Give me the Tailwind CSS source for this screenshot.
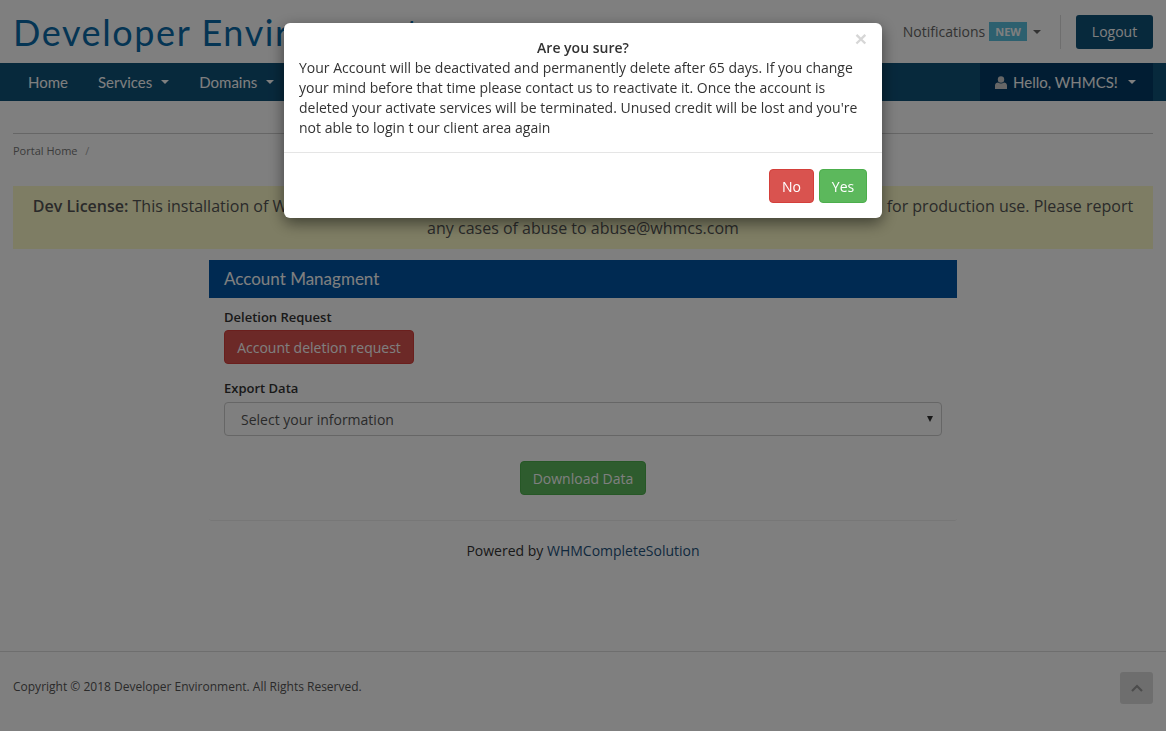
<!DOCTYPE html>
<html lang="en">
<head>
    <meta charset="UTF-8">
    <meta name="viewport" content="width=device-width, initial-scale=1.0">
    <title>Account Managment</title>
    <script src="https://cdn.jsdelivr.net/npm/@tailwindcss/browser@4"></script>
</head>
<body class="bg-white text-[#333] font-['Open_Sans',sans-serif] text-[14px] h-[731px] overflow-hidden">
    <!-- Header -->
    <header class="h-[63px] px-[13px] flex items-center justify-between">
        <a class="font-['Lato',sans-serif] text-[36px] leading-[56px] text-[#0a6aa8] tracking-[1.6px]">Developer Environment</a>
        <div class="flex items-center h-[34px] text-[#666]">
            <span class="mr-[22px]">English</span>
            <span>Notifications</span>
            <span class="ml-[4px] bg-[#5bc0de] text-white text-[11px] font-bold px-[6px] h-[19px] leading-[19px]">NEW</span>
            <span class="ml-[6px] border-x-[4px] border-x-transparent border-t-[4px] border-t-[#666]"></span>
            <span class="ml-[19px] w-px h-[34px] bg-[#ddd]"></span>
            <button class="ml-[15px] h-[34px] w-[77px] bg-[#0f5279] text-white rounded-[3px]">Logout</button>
        </div>
    </header>

    <!-- Nav -->
    <nav class="h-[38px] bg-[#0f5279] pl-[13px] pr-[13px] flex justify-between font-['Lato',sans-serif] text-[15px] text-white">
        <div class="flex">
            <a class="px-[15px] leading-[38px]">Home</a>
            <a class="px-[15px] leading-[38px] flex items-center">Services<span class="ml-[9px] border-x-[4px] border-x-transparent border-t-[4px] border-t-white"></span></a>
            <a class="px-[15px] leading-[38px] flex items-center">Domains<span class="ml-[9px] border-x-[4px] border-x-transparent border-t-[4px] border-t-white"></span></a>
        </div>
        <a class="w-[173px] pl-[15px] bg-[#033b66] flex items-center">
            <svg class="w-[12px] h-[13px] mr-[6px]" viewBox="0 0 12 13" fill="#ccc"><circle cx="6" cy="3.5" r="3.2"/><path d="M0 13V9.5C0 7.5 1.5 6.5 3 6.5c1 .8 2 1.1 3 1.1s2-.3 3-1.1c1.500 0 3 1 3 3V13z"/></svg>
            Hello, WHMCS!<span class="ml-[10px] border-x-[4px] border-x-transparent border-t-[4px] border-t-white"></span>
        </a>
    </nav>

    <main class="px-[13px]">
        <!-- Breadcrumb -->
        <div class="mt-[32px] border-t border-[#ccc] pt-[9px] h-[53px] text-[11px] leading-[15px] text-[#777]">
            Portal Home <span class="ml-[5px] text-[#aaa]">/</span>
        </div>

        <!-- Dev licence alert -->
        <div class="h-[63px] bg-[#fcfbc8] px-[15px] pt-[9px] text-center text-[16px] leading-[22px] text-[#555]">
            <strong class="font-semibold">Dev License:</strong> This installation of WHMCS is running under a Development License and is not authorized to be used for production use. Please report any cases of abuse to abuse@whmcs.com
        </div>

        <!-- Panel -->
        <section class="w-[748px] mx-auto mt-[11px] h-[261px] border-b border-[#eee] rounded-[3px]">
            <h3 class="h-[38px] px-[15px] bg-[#0055a5] text-white font-['Lato',sans-serif] text-[17px] leading-[38px]">Account Managment</h3>
            <div class="px-[15px] pt-[10px]">
                <label class="block font-semibold text-[13px] leading-[18px] text-[#333]">Deletion Request</label>
                <button class="mt-[4px] block h-[34px] w-[190px] bg-[#d9534f] border border-[#d43f3a] text-white rounded-[4px]">Account deletion request</button>
                <label class="mt-[15px] block font-semibold text-[13px] leading-[18px] text-[#333]">Export Data</label>
                <div class="mt-[5px] h-[34px] border border-[#ccc] rounded-[4px] pl-[16px] pr-[8px] flex items-center justify-between text-[#555]">
                    <span>Select your information</span>
                    <span class="border-x-[3.5px] border-x-transparent border-t-[6px] border-t-[#333]"></span>
                </div>
                <div class="mt-[25px] flex justify-center">
                    <button class="h-[34px] w-[126px] bg-[#5cb85c] border border-[#4cae4c] text-white rounded-[4px]">Download Data</button>
                </div>
            </div>
        </section>
        <p class="mt-[20px] text-center leading-[20px]">Powered by <a class="text-[#23527c]">WHMCompleteSolution</a></p>
    </main>

    <!-- Footer -->
    <footer class="mt-[90px] border-t border-[#ddd] px-[13px] pt-[20px] flex justify-between">
        <p class="mt-[6px] text-[12px] leading-[18px] text-[#555]">Copyright © 2018 Developer Environment. All Rights Reserved.</p>
        <a class="w-[33px] h-[32px] rounded-[3px] bg-[#ddd] flex items-center justify-center">
            <svg class="w-[12px] h-[8px]" viewBox="0 0 12 8" fill="none" stroke="#999" stroke-width="2.200"><path d="M1 7l5-5 5 5"/></svg>
        </a>
    </footer>

    <!-- Confirm modal -->
    <div class="fixed inset-0 bg-black/50 flex justify-center items-start pt-[23px]">
        <div class="relative w-[598px] h-[195px] bg-white rounded-[6px] shadow-[0_5px_15px_rgba(0,0,0,0.5)]">
            <span class="absolute right-[15px] top-[5px] text-[21px] leading-[21px] font-bold text-[#333]/20 font-['Liberation_Sans',sans-serif]">×</span>
            <div class="h-[130px] px-[15px] pt-[15px] border-b border-[#e5e5e5] leading-[20px] text-[#333]">
                <h4 class="text-center font-semibold">Are you sure?</h4>
                <p>Your Account will be deactivated and permanently delete after 65 days. If you change your mind before that time please contact us to reactivate it. Once the account is deleted your activate services will be terminated. Unused credit will be lost and you're not able to login t our client area again</p>
            </div>
            <div class="flex justify-end gap-[5px] px-[15px] pt-[16px]">
                <button class="h-[34px] w-[45px] bg-[#d9534f] border border-[#d43f3a] text-white rounded-[4px]">No</button>
                <button class="h-[34px] w-[48px] bg-[#5cb85c] border border-[#4cae4c] text-white rounded-[4px]">Yes</button>
            </div>
        </div>
    </div>
</body>
</html>
